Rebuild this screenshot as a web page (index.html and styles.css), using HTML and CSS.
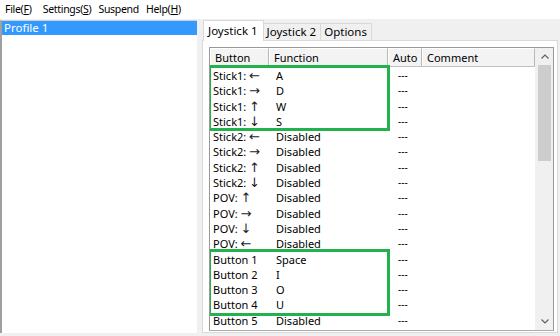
FILE: index.html
```html
<!DOCTYPE html>
<html>
<head>
<meta charset="utf-8">
<link rel="stylesheet" href="styles.css">
</head>
<body>
<div class="menubar">
  <span class="mi m1">File(<u>F</u>)</span>
  <span class="mi m2">Settings(<u>S</u>)</span>
  <span class="mi m3">Suspend</span>
  <span class="mi m4">Help(<u>H</u>)</span>
</div>
<div class="main">
  <div class="left">
    <div class="profile sel">Profile 1</div>
  </div>
  <div class="splitter"></div>
  <div class="right">
    <div class="tabs">
      <div class="tab active">Joystick 1</div>
      <div class="tab">Joystick 2</div>
      <div class="tab">Options</div>
    </div>
    <div class="panel">
      <div class="lv">
        <div class="lv-main">
          <div class="hdr">
            <div class="hc c1">Button</div>
            <div class="hc c2">Function</div>
            <div class="hc c3">Auto</div>
            <div class="hc c4">Comment</div>
          </div>
          <div class="rows">
            <div class="row"><span class="c1">Stick1: <i class="ar">←</i></span><span class="c2">A</span><span class="c3">---</span></div>
            <div class="row"><span class="c1">Stick1: <i class="ar">→</i></span><span class="c2">D</span><span class="c3">---</span></div>
            <div class="row"><span class="c1">Stick1: <i class="ar">↑</i></span><span class="c2">W</span><span class="c3">---</span></div>
            <div class="row"><span class="c1">Stick1: <i class="ar">↓</i></span><span class="c2">S</span><span class="c3">---</span></div>
            <div class="row"><span class="c1">Stick2: <i class="ar">←</i></span><span class="c2">Disabled</span><span class="c3">---</span></div>
            <div class="row"><span class="c1">Stick2: <i class="ar">→</i></span><span class="c2">Disabled</span><span class="c3">---</span></div>
            <div class="row"><span class="c1">Stick2: <i class="ar">↑</i></span><span class="c2">Disabled</span><span class="c3">---</span></div>
            <div class="row"><span class="c1">Stick2: <i class="ar">↓</i></span><span class="c2">Disabled</span><span class="c3">---</span></div>
            <div class="row"><span class="c1">POV: <i class="ar">↑</i></span><span class="c2">Disabled</span><span class="c3">---</span></div>
            <div class="row"><span class="c1">POV: <i class="ar">→</i></span><span class="c2">Disabled</span><span class="c3">---</span></div>
            <div class="row"><span class="c1">POV: <i class="ar">↓</i></span><span class="c2">Disabled</span><span class="c3">---</span></div>
            <div class="row"><span class="c1">POV: <i class="ar">←</i></span><span class="c2">Disabled</span><span class="c3">---</span></div>
            <div class="row"><span class="c1">Button 1</span><span class="c2">Space</span><span class="c3">---</span></div>
            <div class="row"><span class="c1">Button 2</span><span class="c2">I</span><span class="c3">---</span></div>
            <div class="row"><span class="c1">Button 3</span><span class="c2">O</span><span class="c3">---</span></div>
            <div class="row"><span class="c1">Button 4</span><span class="c2">U</span><span class="c3">---</span></div>
            <div class="row"><span class="c1">Button 5</span><span class="c2">Disabled</span><span class="c3">---</span></div>
          </div>
          <div class="mark mark1"></div>
          <div class="mark mark2"></div>
        </div>
        <div class="vscroll">
          <div class="arrow up"><svg width="8" height="5" viewBox="0 0 8 5"><path d="M0.5 4.5 L4 1 L7.5 4.5" fill="none" stroke="#606060" stroke-width="1.2"/></svg></div>
          <div class="track"><div class="thumb"></div></div>
          <div class="arrow down"><svg width="8" height="5" viewBox="0 0 8 5"><path d="M0.5 0.5 L4 4 L7.5 0.5" fill="none" stroke="#606060" stroke-width="1.2"/></svg></div>
        </div>
      </div>
    </div>
  </div>
</div>
</body>
</html>
```
FILE: styles.css
```css
html, body {
  margin: 0;
  padding: 0;
}
body {
  width: 560px;
  height: 336px;
  overflow: hidden;
  background: #f0f0f0;
  font-family: "Noto Sans", "Open Sans", sans-serif;
  font-size: 11px;
  color: #000;
}
.menubar {
  height: 19px;
  background: #fff;
  display: flex;
  align-items: center;
  padding-left: 5px;
  font-size: 10.5px;
  letter-spacing: -0.3px;
}
.mi {
  line-height: 19px;
}
.m1 { margin-right: 11px; }
.m2 { margin-right: 7px; }
.m3 { margin-right: 7px; }
.mi u {
  text-decoration: underline;
  text-underline-offset: 1px;
}
.main {
  display: flex;
  height: 314px;
  margin-top: 1px;
}
.left {
  width: 195px;
  background: #fff;
  border-left: 2px solid #a0a0a0;
  border-top: 1px solid #d0d0d0;
  height: 312px;
}
.profile {
  height: 14px;
  line-height: 14px;
  padding-left: 2px;
  font-size: 11.5px;
}
.profile.sel {
  background: #3399ff;
  color: #fff;
}
.splitter {
  width: 5px;
}
.right {
  width: 356px;
  display: flex;
  flex-direction: column;
}
.tabs {
  display: flex;
  height: 20px;
  align-items: flex-end;
  padding-left: 1px;
  position: relative;
  z-index: 1;
  font-size: 11.5px;
}
.tab {
  height: 16px;
  line-height: 16px;
  padding: 0 4px 0 3px;
  border: 1px solid #d9d9d9;
  border-bottom: none;
  border-left: none;
  background: #f0f0f0;
}
.tab.active {
  height: 20px;
  line-height: 20px;
  border-left: 1px solid #d9d9d9;
  background: #fff;
  margin-bottom: -1px;
  padding: 0 5px 0 4px;
}
.panel {
  border: 1px solid #d9d9d9;
  background: #fff;
  height: 285px;
  padding: 6px 3px 0 6px;
}
.lv {
  display: flex;
  height: 282px;
  border: 1px solid #999;
  border-bottom: 1px solid #adadad;
  background: #fff;
}
.lv-main {
  flex: 1;
  position: relative;
  overflow: hidden;
}
.hdr {
  display: flex;
  height: 18px;
  border-bottom: 1px solid #c0c0c0;
  background: #f3f3f3;
}
.hc {
  box-sizing: border-box;
  border-right: 1px solid #b8b8b8;
  line-height: 18px;
  padding-left: 4px;
  border-top: 1px solid #fff;
  border-left: 1px solid #fff;
}
.hdr .c4 {
  width: 115px;
  border-right: 1px solid #b8b8b8;
}
.c1 { width: 59px; flex: none; }
.c2 { width: 119px; flex: none; }
.c3 { width: 34px; flex: none; }
.row {
  display: flex;
  height: 15.3px;
  line-height: 15.3px;
}
.row span {
  box-sizing: border-box;
  white-space: nowrap;
}
.ar {
  font-style: normal;
  font-family: "DejaVu Sans", sans-serif;
  font-size: 13px;
  line-height: 10px;
  color: #1a1a2a;
}
.row .c1 { padding-left: 3px; }
.row .c2 { padding-left: 7px; }
.row .c3 { padding-left: 10px; font-size: 10px; }
.rows {
  padding-top: 1px;
}
.mark {
  position: absolute;
  left: -2px;
  width: 176px;
  border: 3px solid #22b14c;
}
.mark1 {
  top: 17px;
  height: 60px;
}
.mark2 {
  top: 201px;
  height: 61px;
}
.vscroll {
  width: 17px;
  background: #f0f0f0;
  display: flex;
  flex-direction: column;
  border-left: 1px solid #f0f0f0;
}
.arrow {
  height: 17px;
  display: flex;
  align-items: center;
  justify-content: center;
}
.track {
  flex: 1;
  padding: 0 2px;
}
.thumb {
  height: 96px;
  background: #cdcdcd;
}
```
